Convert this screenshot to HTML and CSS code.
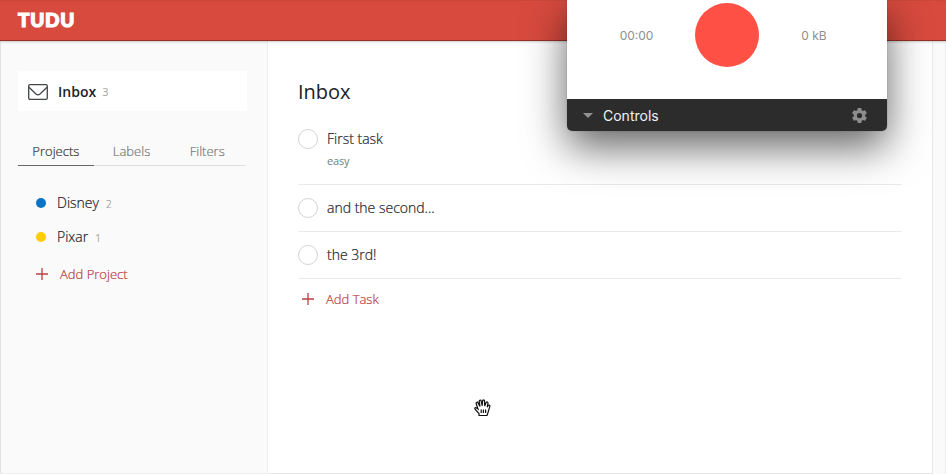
FILE: index.html
```html
<!DOCTYPE html>
<html lang="en">
<head>
<meta charset="utf-8">
<title>TUDU</title>
<link rel="stylesheet" href="styles.css">
</head>
<body>
<div class="app">
  <header class="topbar"><span class="logo">TUDU</span></header>
  <div class="body">
    <aside class="sidebar">
      <a class="inbox">
        <svg class="mail" width="20" height="16" viewBox="0 0 20 16"><rect x=".7" y=".7" width="18.6" height="14.6" rx="1.3"/><path d="M1 3.3 8 10q2 1.8 4 0l7-6.7"/></svg>
        <span class="inbox-name">Inbox</span><span class="count">3</span>
      </a>
      <nav class="tabs"><a class="tab active">Projects</a><a class="tab">Labels</a><a class="tab">Filters</a></nav>
      <ul class="projects">
        <li><i class="dot blue"></i><span>Disney</span><small>2</small></li>
        <li><i class="dot yellow"></i><span>Pixar</span><small>1</small></li>
      </ul>
      <a class="add add-project"><svg width="12" height="12" viewBox="0 0 12 12"><path d="M6 0v12M0 6h12"/></svg><span>Add Project</span></a>
    </aside>
    <main class="content">
      <h1>Inbox</h1>
      <ul class="tasks">
        <li class="labeled"><i class="check"></i><div><p>First task</p><em>easy</em></div></li>
        <li><i class="check"></i><div><p>and the second...</p></div></li>
        <li><i class="check"></i><div><p>the 3rd!</p></div></li>
      </ul>
      <a class="add add-task"><svg width="12" height="12" viewBox="0 0 12 12"><path d="M6 0v12M0 6h12"/></svg><span>Add Task</span></a>
    </main>
    <div class="gutter"></div>
  </div>
  <section class="recorder">
    <div class="record-area"><span>00:00</span><i class="record"></i><span>0 kB</span></div>
    <div class="controls">
      <i class="arrow"></i><span>Controls</span>
      <svg class="gear" width="15" height="15" viewBox="2 2 20 20"><path d="M19.43 12.98c.04-.32.07-.64.07-.98s-.03-.66-.07-.98l2.11-1.65c.19-.15.24-.42.12-.64l-2-3.46c-.12-.22-.39-.3-.61-.22l-2.49 1c-.52-.4-1.08-.73-1.69-.98l-.38-2.65A.49.49 0 0 0 14 2h-4c-.25 0-.46.18-.49.42l-.38 2.65c-.61.25-1.17.59-1.69.98l-2.49-1c-.23-.09-.49 0-.61.22l-2 3.46c-.13.22-.07.49.12.64l2.11 1.65c-.04.32-.07.65-.07.98s.03.66.07.98l-2.11 1.65c-.19.15-.24.42-.12.64l2 3.46c.12.22.39.3.61.22l2.49-1c.52.4 1.08.73 1.69.98l.38 2.65c.03.24.24.42.49.42h4c.25 0 .46-.18.49-.42l.38-2.65c.61-.25 1.17-.59 1.69-.98l2.49 1c.23.09.49 0 .61-.22l2-3.46c.12-.22.07-.49-.12-.64zM12 15.5a3.5 3.5 0 1 1 0-7 3.5 3.5 0 0 1 0 7z"/></svg>
    </div>
  </section>
  <svg class="hand" width="17" height="18" viewBox="0 0 17 18"><path d="M5 16.5v-2L1.2 10.5Q.2 8.8 1.8 8.6L4 10 2.2 4.8Q2 3 3.6 3.1L6 7.5 5.2 2.2Q5.6.6 7 1.3L8.2 6.8 8.6 1.6Q9.6.2 10.5 1.6L10.7 7 12.2 3.2Q13.7 2.4 14 4L13.2 8.2 14.3 6.3Q16.3 5.6 15.8 7.6L14 13.5l-1 3z"/><path d="M7.2 10.5v3.5M9.4 10.5v3.5M11.6 10.5v3.5"/></svg>
</div>
</body>
</html>
```
FILE: styles.css
```css
* { box-sizing: border-box; }
body { margin: 0; font-family: "Open Sans", sans-serif; font-weight: 300; color: #1c2125; }
ul, h1, p { margin: 0; padding: 0; list-style: none; font-weight: inherit; }
.app { position: relative; width: 946px; height: 474px; overflow: hidden; display: flex; flex-direction: column; background: #fff; box-shadow: inset 0 0 0 1px #e4e4e4; }
.topbar { height: 41px; flex: none; padding-left: 18px; background: #d84a3e; border-top: 1px solid #c9473b; border-bottom: 1px solid #943126; box-shadow: 0 1px 2px #0003; z-index: 1; }
.logo { display: block; font: 900 19px/38px Lato, sans-serif; letter-spacing: .7px; color: #fff; -webkit-text-stroke: 1.2px #fff; }
.body { flex: 1; display: flex; }
.sidebar { width: 268px; padding: 30px 20px 0 17px; background: #fafafa; border: solid #eee; border-width: 0 1px 1px; border-left-color: #e3e3e3; }
.inbox { width: 229px; height: 40px; display: flex; align-items: center; padding: 1px 10px 0; background: #fff; }
.mail { margin-top: 1px; fill: none; stroke: #43474a; stroke-width: 1.3; }
.inbox-name { margin-left: 10px; font-size: 14px; font-weight: 600; }
.count { margin-left: 6px; font-size: 11px; font-weight: 400; color: #a5a5a5; }
.tabs { display: flex; width: 227px; height: 35px; margin-top: 20px; border-bottom: 1px solid #ddd; }
.tab { width: 76px; height: 35px; text-align: center; font-size: 13px; line-height: 41px; color: #777; -webkit-text-stroke: .2px; }
.tab.active { color: #333; border-bottom: 1px solid #666; }
.projects { padding: 20px 0 0 18px; }
.projects li { height: 34px; display: flex; align-items: center; font-size: 14px; -webkit-text-stroke: .2px; }
.projects span { margin: -2px 0 0 11px; }
.projects small { margin: 2px 0 0 7px; font-size: 10px; color: #999; }
.dot { width: 10px; height: 10px; border-radius: 50%; }
.blue { background: #0874c9; }
.yellow { background: #ffcc0a; }
.add { display: flex; align-items: center; font-size: 13px; color: #b83a3d; -webkit-text-stroke: .2px; }
.add svg { stroke: #bd4042; stroke-width: 1.3; }
.add-project { height: 40px; padding-left: 18px; }
.add-project span { margin-left: 12px; }
.content { flex: 1; padding: 34px 30px 0 30px; }
h1 { font-size: 20px; font-weight: 400; line-height: 34px; }
.tasks { padding-top: 6px; }
.tasks li { height: 47px; padding-top: 13px; display: flex; border-bottom: 1px solid #eaeaea; }
.tasks li.labeled { height: 70px; padding-top: 14px; }
.check { width: 20px; height: 20px; margin-right: 9px; border: 1px solid #d4d4d4; border-radius: 50%; }
.tasks p { font-size: 14px; line-height: 20px; -webkit-text-stroke: .2px; }
.tasks em { display: block; font-size: 11px; font-style: normal; font-weight: 400; line-height: 24px; letter-spacing: -.2px; color: #6b8577; }
.add-task { height: 40px; padding-left: 4px; }
.add-task span { margin-left: 12px; }
.gutter { width: 14px; background: #fafafa; border-left: 1px solid #e8e8e8; border-right: 1px solid #eee; }
.recorder { position: absolute; z-index: 2; left: 567px; top: 0; width: 320px; height: 131px; border-radius: 0 0 5px 5px; font-family: Inter, sans-serif; font-weight: 400; box-shadow: 0 0 1px #0008, 0 16px 42px #0000009c; }
.record-area { height: 99px; display: grid; grid-template-columns: 1fr 64px 1fr; align-items: start; padding-top: 3px; background: #fff; font-size: 12px; color: #8e8e8e; }
.record-area span { line-height: 66px; text-align: center; padding-left: 11px; }
.record-area span:last-child { padding-left: 0; padding-right: 18px; }
.record { width: 64px; height: 64px; border-radius: 50%; background: #ff5046; }
.controls { height: 32px; display: flex; align-items: center; padding: 1px 20px 0 16px; border-radius: 0 0 5px 5px; background: #2c2c2c; color: #f2f2f2; font-size: 14px; }
.arrow { margin: -1px 10px 0 0; border: solid transparent; border-width: 5px 5px 0; border-top-color: #929292; }
.gear { margin: -1px 0 0 auto; fill: #8d8d8d; }
.hand { position: absolute; left: 474px; top: 399px; fill: #fff; stroke: #111; stroke-width: 1.2; }
```
